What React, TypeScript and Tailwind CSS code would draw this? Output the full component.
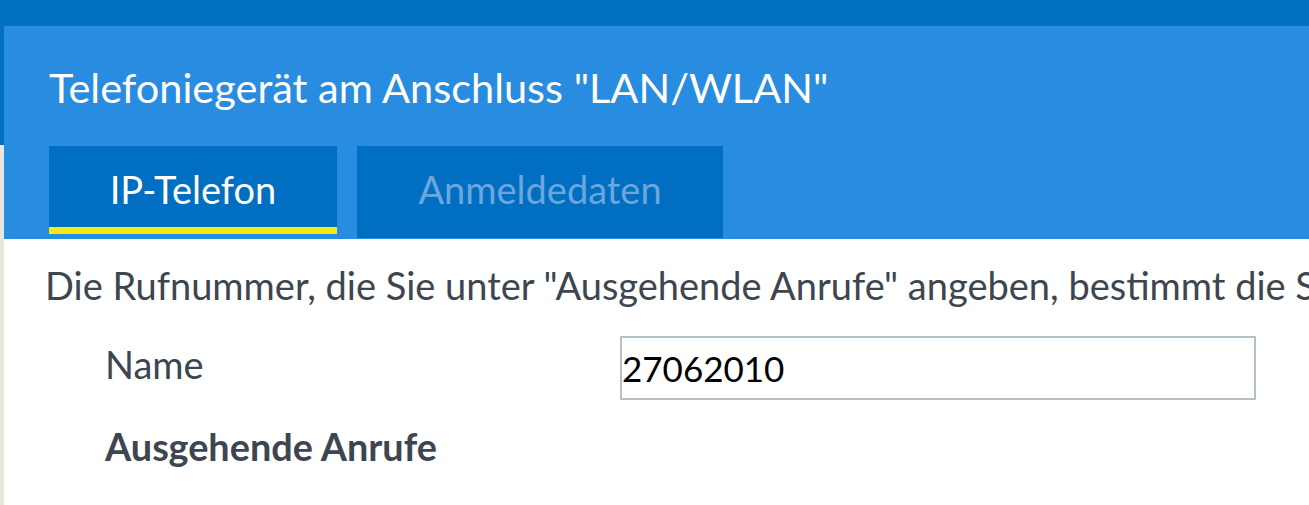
import React from "react";

const font = { fontFamily: "Lato, 'Noto Sans', sans-serif" };

const Tab = ({ label, active }: { label: string; active?: boolean }) => (
  <div
    className={
      active
        ? "h-[88px] w-[288px] border-b-[7px] border-[#f7e915] bg-[#006ec1] pt-[20px] text-center text-[38px] leading-[46px] text-white"
        : "h-[92px] w-[366px] bg-[#006ec1] pt-[20px] text-center text-[38px] leading-[46px] text-[#6ba7dd]"
    }
  >
    {label}
  </div>
);

export default function App() {
  return (
    <div className="flex h-[505px] w-full flex-col overflow-hidden bg-white" style={font}>
      <div className="h-[26px] shrink-0 bg-[#0070c1]" />
      <div className="flex flex-1">
        <div className="flex w-[4px] shrink-0 flex-col">
          <div className="h-[119px] bg-[#0070c1]" />
          <div className="flex-1 bg-[#e9e6de]" />
        </div>
        <main className="min-w-0 flex-1 overflow-hidden">
          <header className="bg-[#288ce0] px-[45px] pt-[36px]">
            <h1 className="whitespace-nowrap text-[41.5px] font-normal leading-[50px] text-white">
              Telefoniegerät am Anschluss "LAN/WLAN"
            </h1>
            <nav className="mt-[34px] flex h-[93px] items-start gap-[20px]">
              <Tab label="IP-Telefon" active />
              <Tab label="Anmeldedaten" />
            </nav>
          </header>

          <section className="pl-[41px] text-[#3d4650]">
            <p className="mt-[23px] whitespace-nowrap text-[38px] leading-[46px]">
              Die Rufnummer, die Sie unter "Ausgehende Anrufe" angeben, bestimmt die Signalisierung
            </p>
            <div className="mt-[28px] flex items-start pl-[60px]">
              <label className="w-[515px] shrink-0 pt-[5px] text-[38px] leading-[46px]">Name</label>
              <input
                className="h-[64px] w-[636px] border-2 border-[#b4c2c8] px-0 text-[35px] leading-[46px] text-black outline-none"
                style={font}
                defaultValue="27062010"
              />
            </div>
            <h2 className="mt-[24px] pl-[60px] text-[37.8px] font-bold leading-[46px]">
              Ausgehende Anrufe
            </h2>
          </section>
        </main>
      </div>
    </div>
  );
}
